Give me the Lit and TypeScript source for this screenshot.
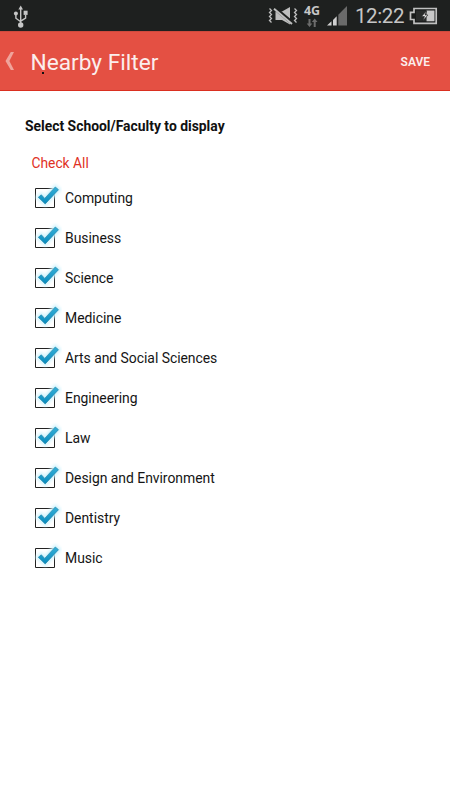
import { LitElement, html, css, svg } from "lit";
import { customElement, property } from "lit/decorators.js";

const FACULTIES = [
  "Computing",
  "Business",
  "Science",
  "Medicine",
  "Arts and Social Sciences",
  "Engineering",
  "Law",
  "Design and Environment",
  "Dentistry",
  "Music",
];

@customElement("status-bar")
class StatusBar extends LitElement {
  static styles = css`
    :host {
      display: flex;
      align-items: center;
      height: 31px;
      padding: 0 12px 0 13px;
      box-sizing: border-box;
      background: #1e201f;
      color: #c6c6c6;
    }
    svg { display: block; flex: none; }
    .spacer { flex: 1; }
    .network {
      width: 18px;
      margin: 0 6px 0 5px;
      display: flex;
      flex-direction: column;
      align-items: center;
      height: 25px;
    }
    .gen { font-family: "Noto Sans", sans-serif; font-size: 12.5px; line-height: 15px; font-weight: 700; }
    .time { font-size: 20.5px; line-height: 31px; width: 50px; margin: 2px 4px 0 8px; white-space: nowrap; letter-spacing: -0.4px; }
  `;
  render() {
    return html`
      <svg width="16" height="24" viewBox="0 0 16 24" fill="none" stroke="#c6c6c6" stroke-width="1.4">
        <path d="M7.700 4v17M2.900 11v3.200l4.800 3.600M12.600 11v3l-4.900 3.200" />
        <path d="M7.700 1.500l2.300 4h-4.600z" fill="#c6c6c6" stroke="none" />
        <circle cx="2.900" cy="9.500" r="2" fill="#c6c6c6" stroke="none" />
        <rect x="10.600" y="6.700" width="4" height="4.200" fill="#c6c6c6" stroke="none" />
        <circle cx="7.700" cy="21" r="2.700" fill="#c6c6c6" stroke="none" />
      </svg>
      <div class="spacer"></div>
      <svg width="30" height="20" viewBox="268 6 30 20" fill="none" stroke="#bdbdbd" stroke-width="1.300">
        <path d="M275.500 11.500h6.500l8-4.500v17.500l-8-4.500h-6.500z" fill="#bdbdbd" stroke="none" />
        <path d="M274 7.500l19 16" stroke="#1e201f" stroke-width="3.600" />
        <path d="M274 8.700l18 15.300" stroke-width="2" />
        <path d="M269.500 8.500l2 2-2 2 2 2-2 2 2 2-2 2 2 2M294.500 8.500l2 2-2 2 2 2-2 2 2 2-2 2 2 2" />
      </svg>
      <div class="network">
        <span class="gen">4G</span>
        <svg width="12" height="10" viewBox="0 0 12 10" fill="#6c6c6c">
          <path d="M2.500 1h2v4.500h1.800l-2.800 3.500L.7 5.500h1.800zM7.700 9h2V4h1.800L8.700.5 5.900 4h1.800z" />
        </svg>
      </div>
      <svg width="20" height="20" viewBox="0 0 20 20">
        <path d="M20 0v19.500h-8.700V8.700z" fill="#6a6a6a" />
        <path d="M4.500 15.200v4.300H0zM9.700 10.200v9.300H6v-5.600z" fill="#d0d0d0" />
      </svg>
      <span class="time">12:22</span>
      <svg width="29" height="18" viewBox="0 0 29 18">
        <path d="M5 1.500h22.200v14.800H5v-3.800H1.500V5.300H5z" fill="#191b1a" stroke="#c0c0c0" stroke-width="1.700" />
        <path d="M7 3.500h10v10.800H7z" fill="#292b2a" />
        <path d="M17.500 3.500h8v10.800h-8z" fill="#c8c8c8" />
        <path d="M17.500 4l-5 5.500h3l-1.500 4 5-5.500h-3z" fill="#ddd" stroke="#222" stroke-width=".6" />
      </svg>
    `;
  }
}

@customElement("title-bar")
class TitleBar extends LitElement {
  static styles = css`
    :host {
      display: flex;
      align-items: center;
      height: 60px;
      box-sizing: border-box;
      padding: 0 20px 0 5px;
      background: #e45043;
      border-top: 1px solid #cf4a3e;
      border-bottom: 1px solid #da2f20;
      color: #fbeeed;
    }
    .back { display: block; flex: none; }
    .title { position: relative; margin-left: 15.500px; font-size: 22.700px; line-height: 30px; white-space: nowrap; top: 2px; }
    .title::after { content: ""; position: absolute; left: 11px; top: 24px; width: 2px; height: 2px; background: #111; }
    .save { margin-left: auto; font-size: 12px; font-weight: 600; line-height: 16px; padding-top: 2px; }
  `;
  render() {
    return html`
      <svg class="back" width="10" height="20" viewBox="0 0 10 20">
        <path d="M5.800 1h3.200L4.400 10l4.600 9H5.800L.5 10z" fill="#f0a39b" />
      </svg>
      <span class="title">Nearby Filter</span>
      <span class="save">SAVE</span>
    `;
  }
}

@customElement("faculty-row")
class FacultyRow extends LitElement {
  @property() label = "";
  @property({ type: Boolean }) checked = false;
  static styles = css`
    :host { display: flex; align-items: center; height: 40px; font-size: 13.950px; color: #151515; }
    .box { display: block; flex: none; width: 32px; height: 32px; }
    .glow { filter: blur(1.500px); }
    .label { margin-left: 3px; line-height: 20px; white-space: nowrap; letter-spacing: -0.04px; }
  `;
  render() {
    const tick = "M8.300 15.300l3-2.500 3.400 3.600L25.300 5l3.200 2.700L15.200 21.900z";
    return html`
      <svg class="box" viewBox="0 0 32 32">
        <defs>
          <linearGradient id="tick" x1="0" y1="0" x2="0" y2="1">
            <stop offset="0" stop-color="#36afd7" />
            <stop offset="1" stop-color="#078bbd" />
          </linearGradient>
        </defs>
        <path d="M5.500 6.500h19v19h-19z" fill="#fff" stroke="#222" stroke-width="1" />
        ${this.checked
          ? svg`<path class="glow" d=${tick} fill="#c5eefb" stroke="#d3f4fd" stroke-width="4.500" />
              <path d=${tick} fill="url(#tick)" stroke="#1f86ac" stroke-width=".7" />`
          : null}
      </svg>
      <span class="label">${this.label}</span>
    `;
  }
}

@customElement("app-root")
class AppRoot extends LitElement {
  static styles = css`
    :host {
      display: block;
      height: 800px;
      overflow: hidden;
      background: #fff;
      font-family: Roboto, "Noto Sans", sans-serif;
    }
    .content { padding: 25px 25px 0; }
    .heading { margin: 0; font-size: 13.900px; line-height: 20px; font-weight: 700; color: #111; }
    .all { margin: 17px 0 5px 6.500px; font-size: 13.800px; line-height: 20px; color: #df3024; }
    .list { padding-left: 5px; }
  `;
  render() {
    return html`
      <status-bar></status-bar>
      <title-bar></title-bar>
      <main class="content">
        <h1 class="heading">Select School/Faculty to display</h1>
        <div class="all">Check All</div>
        <div class="list">
          ${FACULTIES.map((name) => html`<faculty-row .label=${name} checked></faculty-row>`)}
        </div>
      </main>
    `;
  }
}
